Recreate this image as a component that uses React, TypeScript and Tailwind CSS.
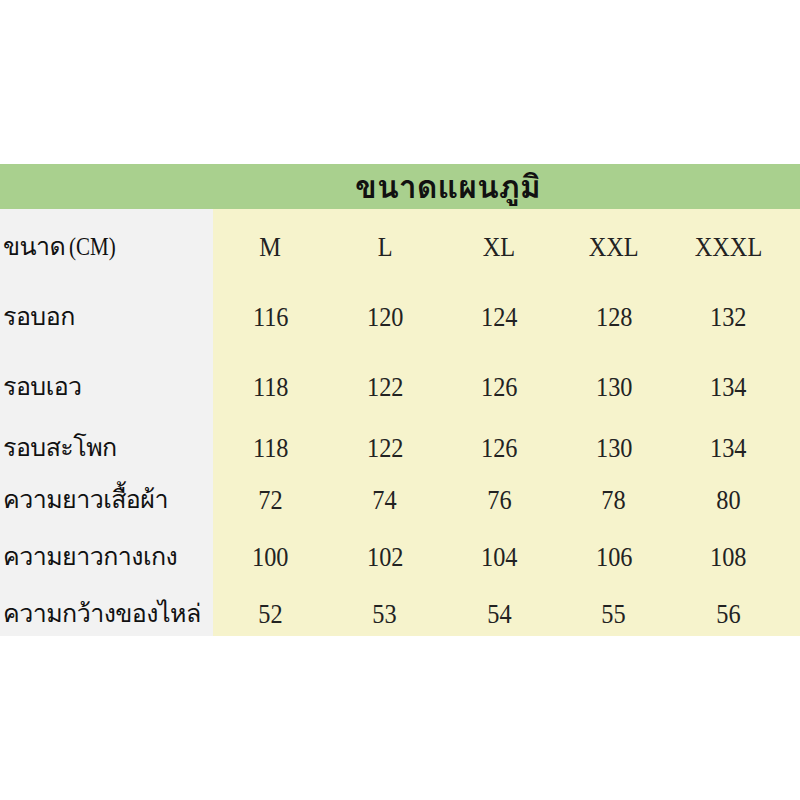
import React from 'react';

const sizes = ['M', 'L', 'XL', 'XXL', 'XXXL'];

const rows: { label: string; values: string[]; h: string }[] = [
  { label: 'รอบอก', values: ['116', '120', '124', '128', '132'], h: 'h-[70px]' },
  { label: 'รอบเอว', values: ['118', '122', '126', '130', '134'], h: 'h-[70px]' },
  { label: 'รอบสะโพก', values: ['118', '122', '126', '130', '134'], h: 'h-[61px]' },
  { label: 'ความยาวเสื้อผ้า', values: ['72', '74', '76', '78', '80'], h: 'h-[52px]' },
  { label: 'ความยาวกางเกง', values: ['100', '102', '104', '106', '108'], h: 'h-[57px]' },
  { label: 'ความกว้างของไหล่', values: ['52', '53', '54', '55', '56'], h: 'h-[57px]' },
];

const thai = "font-['Tahoma','Loma','Garuda','Noto_Sans_Thai_Looped','Noto_Serif_Thai','Noto_Sans_Thai',sans-serif]";
const serif = "font-['Liberation_Serif','DejaVu_Serif',serif]";

function Row({ label, values, h }: { label: React.ReactNode; values: string[]; h: string }) {
  return (
    <div className={`grid grid-cols-[213px_repeat(5,114.5px)_1fr] ${h}`}>
      <div className="bg-[#f2f2f2] flex items-end">
        <div className={`h-[44px] flex items-center whitespace-nowrap pl-[3px] text-[25px] tracking-[-0.55px] text-[#111] ${thai}`}>
          {label}
        </div>
      </div>
      {values.map((v, i) => (
        <div key={i} className="bg-[#f6f3cc] flex items-end justify-center">
          <div className={`h-[44px] flex items-center text-[27px] scale-x-[0.9] text-[#222] ${serif}`}>{v}</div>
        </div>
      ))}
      <div className="bg-[#f6f3cc]" />
    </div>
  );
}

export default function App() {
  return (
    <div className="w-[800px] h-[800px] bg-white pt-[164px]">
      {/* Title bar */}
      <div className="h-[45px] bg-[#a9d08e] flex items-center pl-[355px]">
        <h1 className={`text-[32px] font-bold text-[#111] leading-none whitespace-nowrap ${thai}`}>ขนาดแผนภูมิ</h1>
      </div>

      <Row
        h="h-[60px]"
        label={
          <>
            <span>ขนาด</span>
            <span className={`${serif} text-[25px] tracking-normal ml-[4px] inline-block scale-x-[0.84] origin-left`}>(CM)</span>
          </>
        }
        values={sizes}
      />
      {rows.map((r) => (
        <Row key={r.label} label={r.label} values={r.values} h={r.h} />
      ))}
    </div>
  );
}
